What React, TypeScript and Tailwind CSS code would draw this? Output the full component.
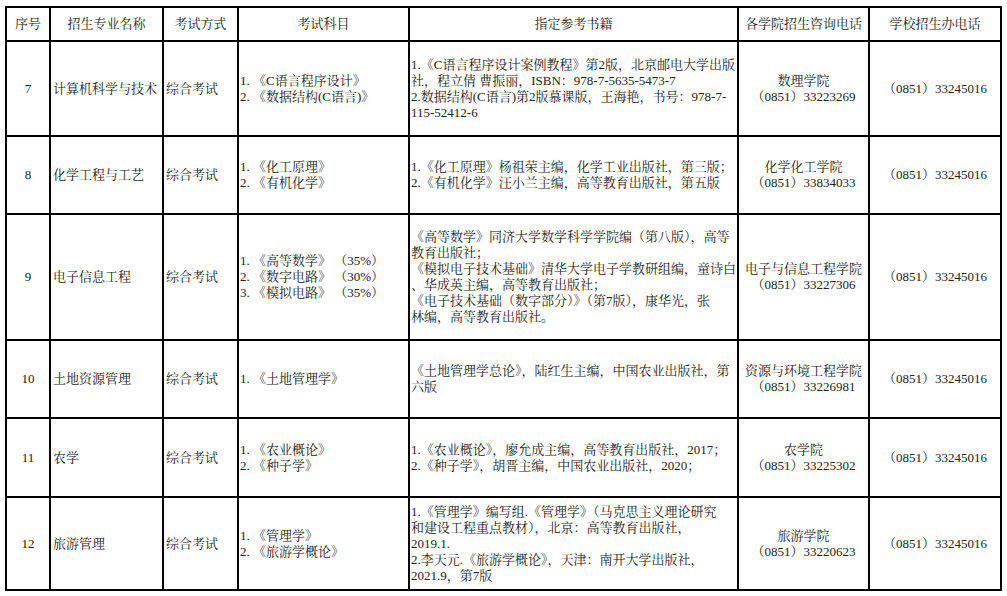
const rows = [
  {
    no: "7",
    major: "计算机科学与技术",
    subjects: ["1. 《C语言程序设计》", "2. 《数据结构(C语言)》"],
    books: [
      "1.《C语言程序设计案例教程》第2版，北京邮电大学出版",
      "社，程立倩 曹振丽，ISBN：978-7-5635-5473-7",
      "2.数据结构(C语言)第2版慕课版，王海艳，书号：978-7-",
      "115-52412-6",
    ],
    college: "数理学院",
    collegeTel: "（0851）33223269",
    height: "h-[93px]",
  },
  {
    no: "8",
    major: "化学工程与工艺",
    subjects: ["1. 《化工原理》", "2. 《有机化学》"],
    books: [
      "1.《化工原理》杨祖荣主编，化学工业出版社，第三版；",
      "2.《有机化学》汪小兰主编，高等教育出版社，第五版",
    ],
    college: "化学化工学院",
    collegeTel: "（0851）33834033",
    height: "h-[76px]",
  },
  {
    no: "9",
    major: "电子信息工程",
    subjects: ["1. 《高等数学》 （35%）", "2. 《数字电路》 （30%）", "3. 《模拟电路》 （35%）"],
    books: [
      "《高等数学》同济大学数学科学学院编（第八版），高等",
      "教育出版社；",
      "《模拟电子技术基础》清华大学电子学教研组编，童诗白",
      "、华成英主编，高等教育出版社；",
      "《电子技术基础（数字部分）》（第7版），康华光，张",
      "林编，高等教育出版社。",
    ],
    college: "电子与信息工程学院",
    collegeTel: "（0851）33227306",
    height: "h-[124px]",
  },
  {
    no: "10",
    major: "土地资源管理",
    subjects: ["1. 《土地管理学》"],
    books: ["《土地管理学总论》，陆红生主编，中国农业出版社，第", "六版"],
    college: "资源与环境工程学院",
    collegeTel: "（0851）33226981",
    height: "h-[76px]",
  },
  {
    no: "11",
    major: "农学",
    subjects: ["1. 《农业概论》", "2. 《种子学》"],
    books: [
      "1.《农业概论》，廖允成主编，高等教育出版社，2017；",
      "2.《种子学》，胡晋主编，中国农业出版社，2020；",
    ],
    college: "农学院",
    collegeTel: "（0851）33225302",
    height: "h-[77px]",
  },
  {
    no: "12",
    major: "旅游管理",
    subjects: ["1. 《管理学》", "2. 《旅游学概论》"],
    books: [
      "1.《管理学》编写组.《管理学》（马克思主义理论研究",
      "和建设工程重点教材），北京：高等教育出版社，",
      "2019.1.",
      "2.李天元.《旅游学概论》，天津：南开大学出版社，",
      "2021.9，第7版",
    ],
    college: "旅游学院",
    collegeTel: "（0851）33220623",
    height: "h-[91px]",
  },
];

const headers = [
  "序号",
  "招生专业名称",
  "考试方式",
  "考试科目",
  "指定参考书籍",
  "各学院招生咨询电话",
  "学校招生办电话",
];

const cell = "bg-white flex items-center overflow-hidden whitespace-pre";

function Lines({ items }: { items: string[] }) {
  return (
    <div>
      {items.map((t) => (
        <div key={t}>{t}</div>
      ))}
    </div>
  );
}

export default function App() {
  return (
    <div className="min-h-[596px] w-[1007px] bg-white pl-[5px] pt-[6px] font-['Liberation_Serif','Noto_Serif_CJK_SC','Noto_Sans_CJK_SC',serif] text-[13px] leading-4 text-[#222]">
      <div className="grid w-[997px] grid-cols-[42px_111px_73px_169px_327px_129px_130px] gap-[2px] bg-black p-[2px]">
        {headers.map((h) => (
          <div key={h} className={`${cell} h-[32px] justify-center`}>
            {h}
          </div>
        ))}

        {rows.map((r) => (
          <div key={r.no} className="contents">
            <div className={`${cell} ${r.height} justify-center`}>{r.no}</div>
            <div className={`${cell} ${r.height} pl-[2px]`}>{r.major}</div>
            <div className={`${cell} ${r.height} pl-[2px]`}>综合考试</div>
            <div className={`${cell} ${r.height} pl-[1px]`}>
              <Lines items={r.subjects} />
            </div>
            <div className={`${cell} ${r.height} pl-[1px]`}>
              <Lines items={r.books} />
            </div>
            <div className={`${cell} ${r.height} justify-center text-center`}>
              <div>
                <div>{r.college}</div>
                <div>{r.collegeTel}</div>
              </div>
            </div>
            <div className={`${cell} ${r.height} justify-center`}>（0851）33245016</div>
          </div>
        ))}
      </div>
    </div>
  );
}
